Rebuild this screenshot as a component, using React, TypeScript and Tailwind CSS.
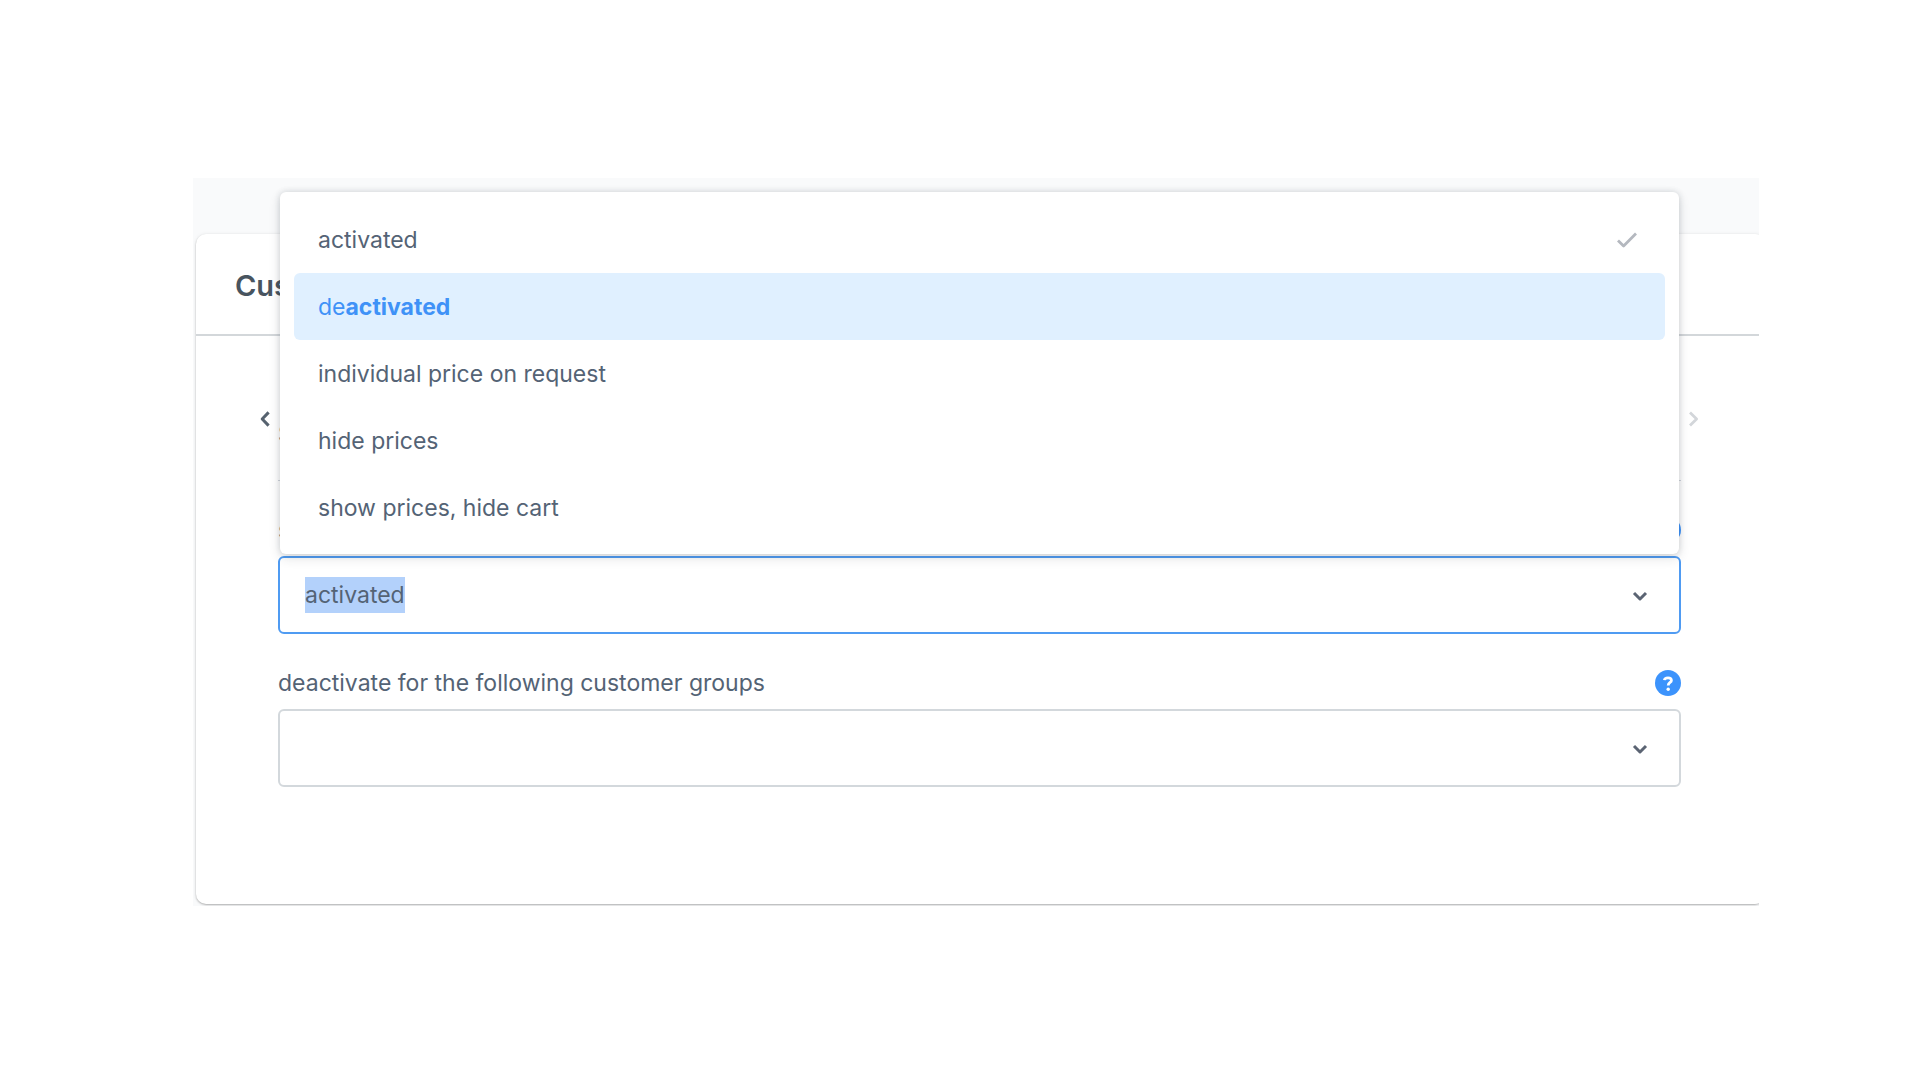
import React, { useEffect, useRef, useState } from 'react';

interface PriceOption {
  value: string;
  prefix?: string;
  label: string;
}

const OPTIONS: PriceOption[] = [
  { value: 'activated', label: 'activated' },
  { value: 'deactivated', prefix: 'de', label: 'activated' },
  { value: 'request', label: 'individual price on request' },
  { value: 'hide-prices', label: 'hide prices' },
  { value: 'hide-cart', label: 'show prices, hide cart' },
];

const ChevronDown = () => (
  <svg width="16" height="12" viewBox="0 0 16 12" fill="none" aria-hidden="true">
    <path d="M2 3 L8 9 L14 3" stroke="#5b6473" strokeWidth="3" strokeLinejoin="round" />
  </svg>
);

const HelpButton = () => (
  <button type="button" aria-label="Help" className="h-[26px] w-[26px] shrink-0">
    <svg width="26" height="26" viewBox="0 0 26 26" fill="none" aria-hidden="true">
      <circle cx="13" cy="13" r="13" fill="#3c93fc" />
      <path d="M9.4 10.2 C9.6 8.6 11.2 7.8 13 7.8 C15.2 7.8 16.4 8.8 16.4 10.4 C16.4 12.6 13.2 12.4 13.2 15.6" stroke="white" strokeWidth="2.8" />
      <circle cx="13.2" cy="19.2" r="1.7" fill="white" />
    </svg>
  </button>
);

interface FieldProps {
  id: string;
  label: string;
  children: React.ReactNode;
}

const Field: React.FC<FieldProps> = ({ id, label, children }) => (
  <div className="mt-[33px] mr-[20px] ml-[18px]">
    <div className="mb-[10px] flex h-8 items-center justify-between">
      <label htmlFor={id} className="text-[23px] leading-8">{label}</label>
      <HelpButton />
    </div>
    {children}
  </div>
);

const App: React.FC = () => {
  const [selected, setSelected] = useState('activated');
  const inputRef = useRef<HTMLInputElement>(null);

  // The search box opens focused, with its value selected
  useEffect(() => {
    inputRef.current?.focus();
    inputRef.current?.select();
  }, []);

  return (
    <main className="min-h-screen bg-white pt-[178px] pr-[161px] pl-[193px] font-['Inter','Liberation_Sans',sans-serif] text-[#546375]">
      <div className="overflow-hidden bg-[#f9fafb] pt-14 pb-[2px] pl-[3px]">
        <section className="-mr-[6px] rounded-[10px] bg-white pb-[117px] shadow-[0_1px_2px_rgba(0,0,0,0.28),0_0_4px_rgba(0,0,0,0.06)]">
          <header className="flex h-[102px] items-center border-b-2 border-[#d3d7da] px-[39px] pt-1">
            <h2 className="text-[29px] leading-9 font-semibold text-[#48545f]">Cus</h2>
          </header>

          <div className="px-[64px] pt-[35px]">
            <div className="flex h-[110px] items-start">
              <button type="button" aria-label="Previous tab" className="flex h-[96px] w-[18px] items-center">
                <svg width="10" height="16" viewBox="0 0 10 16" fill="none" aria-hidden="true">
                  <path d="M8.6 1.4 L2.2 8 L8.6 14.6" stroke="#56626f" strokeWidth="3" strokeLinejoin="round" />
                </svg>
              </button>
              <div className="h-full grow border-b border-[#d1d5db] pt-[49px] text-[23px] leading-7">S</div>
              <button type="button" aria-label="Next tab" className="flex h-[96px] w-5 items-center justify-end pr-px">
                <svg width="12" height="16" viewBox="0 0 12 16" fill="none" aria-hidden="true">
                  <path d="M2 1.6 L8.6 8 L2 14.4" stroke="#d3d6da" strokeWidth="2.8" strokeLinejoin="round" />
                </svg>
              </button>
            </div>

            <Field id="price-mode" label="s">
              <div className="relative flex h-[78px] items-center rounded-[6px] border-2 border-[#4f9bf2] bg-white pr-[31px] pl-[25px]">
                <input
                  id="price-mode"
                  ref={inputRef}
                  type="text"
                  defaultValue="activated"
                  className="h-9 min-w-0 grow bg-transparent text-[23px] leading-9 caret-transparent outline-none selection:bg-[#b3d1fb] selection:text-[#546375]"
                />
                <button type="button" aria-label="Toggle options" className="pt-[2px]">
                  <ChevronDown />
                </button>

                <div
                  role="listbox"
                  aria-label="Price options"
                  className="absolute right-0 bottom-full left-0 mb-1 rounded-[6px] bg-white px-[14px] pt-[14px] pb-[13px] shadow-[0_0_6px_rgba(40,50,60,0.16),0_4px_12px_rgba(40,50,60,0.14)]"
                >
                  {OPTIONS.map(option => (
                    <button
                      key={option.value}
                      type="button"
                      role="option"
                      aria-selected={option.value === selected}
                      onClick={() => setSelected(option.value)}
                      className={`flex h-[67px] w-full items-center justify-between rounded-[6px] pr-7 pl-6 text-left text-[23px] leading-8 ${option.prefix ? 'bg-[#e0f0ff] text-[#3f92f7]' : ''}`}
                    >
                      <span>
                        {option.prefix}
                        {option.prefix ? <strong className="font-bold">{option.label}</strong> : option.label}
                      </span>
                      {option.value === selected && (
                        <svg width="20" height="16" viewBox="0 0 20 16" fill="none" aria-hidden="true">
                          <path d="M1 8.4 L6.6 14 L19 1.6" stroke="#b4b8bf" strokeWidth="2.8" strokeLinejoin="round" />
                        </svg>
                      )}
                    </button>
                  ))}
                </div>
              </div>
            </Field>

            <Field id="customer-groups" label="deactivate for the following customer groups">
              <div className="flex h-[78px] items-center rounded-[6px] border-2 border-[#d3d8dc] bg-white pr-[31px] pl-[25px]">
                <input
                  id="customer-groups"
                  type="text"
                  className="h-9 min-w-0 grow bg-transparent text-[23px] leading-9 outline-none"
                />
                <button type="button" aria-label="Toggle customer groups" className="pt-[2px]">
                  <ChevronDown />
                </button>
              </div>
            </Field>
          </div>
        </section>
      </div>
    </main>
  );
};

export default App;
